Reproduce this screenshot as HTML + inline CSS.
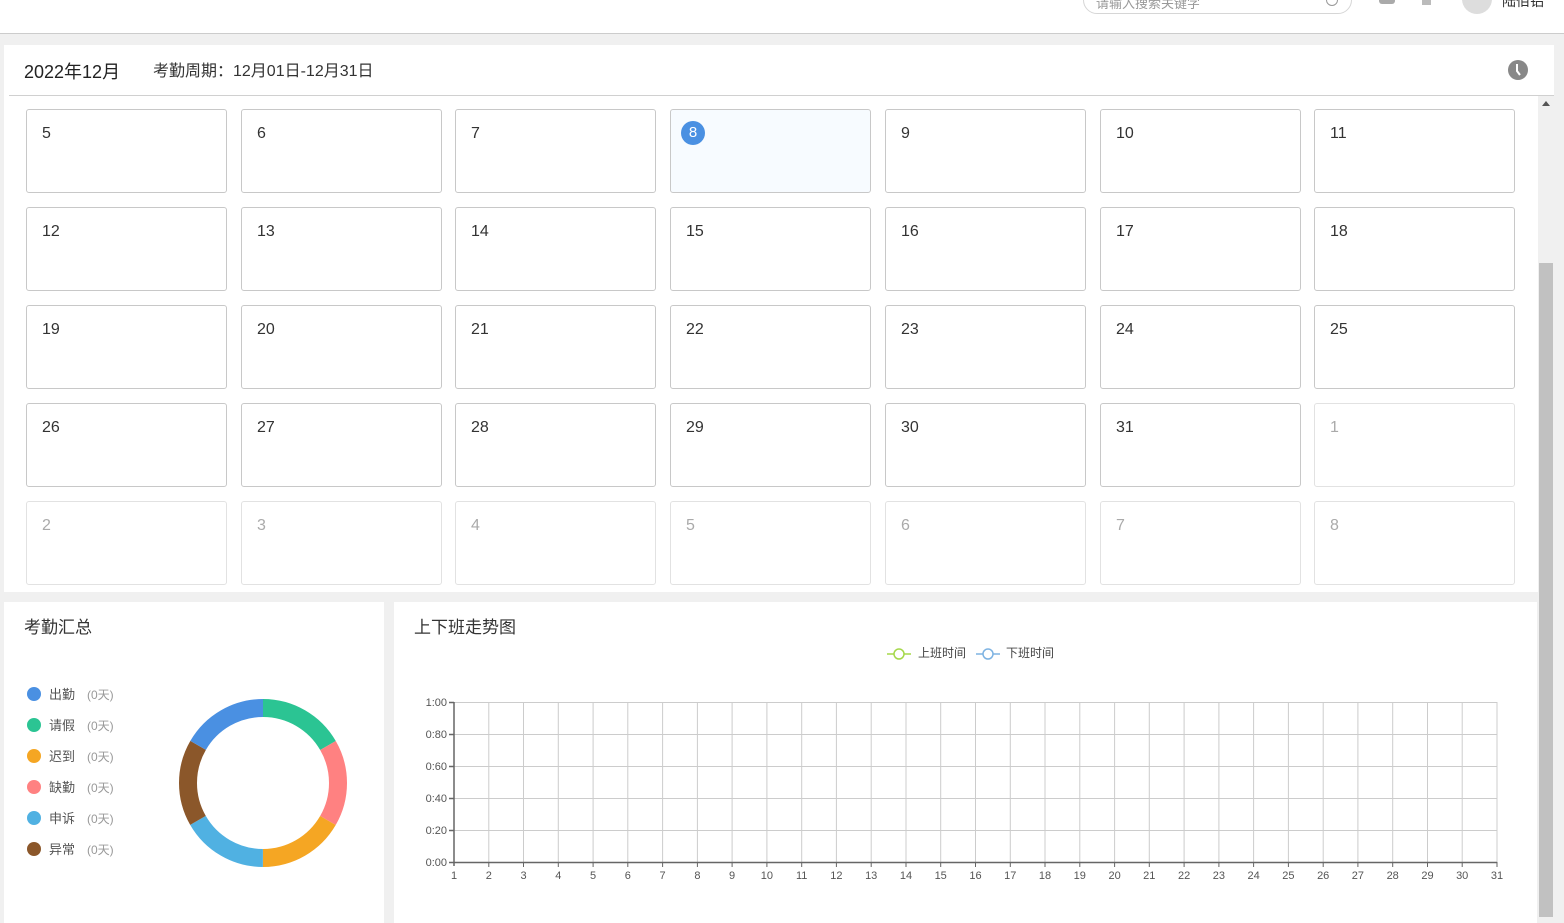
<!DOCTYPE html>
<html><head><meta charset="utf-8"><style>
*{margin:0;padding:0;box-sizing:border-box}
body{width:1564px;height:923px;overflow:hidden;background:#f0f0f0;font-family:"Liberation Sans","Noto Sans CJK SC",sans-serif;position:relative;color:#333}
.a{position:absolute}
.cell{position:absolute;width:201px;height:84px;border:1px solid #c8c8c8;border-radius:3px;background:#fff;font-size:16px;color:#333;padding:15px 0 0 15px}
.cell.o{border-color:#e2e2e2;color:#aaa}
.lg{position:absolute;left:27px;font-size:13px;color:#555}
.lg i{display:inline-block;width:14px;height:14px;border-radius:50%;vertical-align:-2px;margin-right:8px}
.lg span{color:#999;margin-left:12px;font-size:12px}
</style></head><body>
<div class="a" style="left:0;top:0;width:1564px;height:34px;background:#fff;border-bottom:1px solid #ccc"></div>
<div class="a" style="left:1083px;top:-14px;width:269px;height:28px;border:1px solid #d6d6d6;border-radius:14px;background:#fff;font-size:13px;color:#999;padding:10px 0 0 12px;overflow:hidden;line-height:14px">请输入搜索关键字</div>
<div class="a" style="left:1326px;top:-6px;width:12px;height:12px;border:1.5px solid #999;border-radius:50%"></div>
<div class="a" style="left:1379px;top:-4px;width:16px;height:8px;background:#aaa;border-radius:3px"></div>
<div class="a" style="left:1422px;top:-4px;width:9px;height:9px;background:#bbb"></div>
<div class="a" style="left:1462px;top:-16px;width:30px;height:30px;border-radius:50%;background:#ddd"></div>
<div class="a" style="left:1502px;top:-9px;font-size:14px;color:#333">陆佰铝</div>

<div class="a" style="left:4px;top:45px;width:1550px;height:547px;background:#fff"></div>
<div class="a" style="left:24px;top:58px;font-size:18px;color:#222">2022年12月</div>
<div class="a" style="left:153px;top:57px;font-size:16px;color:#333">考勤周期：12月01日-12月31日</div>
<svg class="a" style="left:1508px;top:60px" width="20" height="20"><circle cx="10" cy="10" r="10" fill="#888"/><path d="M9 4v7l3 4" stroke="#fff" stroke-width="2" fill="none"/></svg>
<div class="a" style="left:9px;top:95px;width:1545px;height:1px;background:#d0d0d0"></div>

<div class="cell" style="left:26px;top:109px">5</div><div class="cell" style="left:241px;top:109px">6</div><div class="cell" style="left:455px;top:109px">7</div>
<div class="cell" style="left:670px;top:109px;background:#f7fbff;padding:11px 0 0 10px"><span style="display:inline-block;width:24px;height:24px;border-radius:50%;background:#4a90e2;color:#fff;text-align:center;line-height:24px;font-size:15px">8</span></div>
<div class="cell" style="left:885px;top:109px">9</div><div class="cell" style="left:1100px;top:109px">10</div><div class="cell" style="left:1314px;top:109px">11</div>
<div class="cell" style="left:26px;top:207px">12</div><div class="cell" style="left:241px;top:207px">13</div><div class="cell" style="left:455px;top:207px">14</div><div class="cell" style="left:670px;top:207px">15</div><div class="cell" style="left:885px;top:207px">16</div><div class="cell" style="left:1100px;top:207px">17</div><div class="cell" style="left:1314px;top:207px">18</div>
<div class="cell" style="left:26px;top:305px">19</div><div class="cell" style="left:241px;top:305px">20</div><div class="cell" style="left:455px;top:305px">21</div><div class="cell" style="left:670px;top:305px">22</div><div class="cell" style="left:885px;top:305px">23</div><div class="cell" style="left:1100px;top:305px">24</div><div class="cell" style="left:1314px;top:305px">25</div>
<div class="cell" style="left:26px;top:403px">26</div><div class="cell" style="left:241px;top:403px">27</div><div class="cell" style="left:455px;top:403px">28</div><div class="cell" style="left:670px;top:403px">29</div><div class="cell" style="left:885px;top:403px">30</div><div class="cell" style="left:1100px;top:403px">31</div><div class="cell o" style="left:1314px;top:403px">1</div>
<div class="cell o" style="left:26px;top:501px">2</div><div class="cell o" style="left:241px;top:501px">3</div><div class="cell o" style="left:455px;top:501px">4</div><div class="cell o" style="left:670px;top:501px">5</div><div class="cell o" style="left:885px;top:501px">6</div><div class="cell o" style="left:1100px;top:501px">7</div><div class="cell o" style="left:1314px;top:501px">8</div>

<div class="a" style="left:1538px;top:96px;width:16px;height:827px;background:#f0f0f0"></div>
<div class="a" style="left:1542px;top:101px;width:0;height:0;border-left:4px solid transparent;border-right:4px solid transparent;border-bottom:5px solid #555"></div>
<div class="a" style="left:1539px;top:263px;width:14px;height:654px;background:#c1c1c1"></div>

<div class="a" style="left:4px;top:602px;width:380px;height:321px;background:#fff"></div>
<div class="a" style="left:24px;top:613px;font-size:17px;color:#333">考勤汇总</div>
<div class="lg" style="top:684px"><i style="background:#4a90e2"></i>出勤<span>(0天)</span></div>
<div class="lg" style="top:715px"><i style="background:#2bc493"></i>请假<span>(0天)</span></div>
<div class="lg" style="top:746px"><i style="background:#f5a623"></i>迟到<span>(0天)</span></div>
<div class="lg" style="top:777px"><i style="background:#ff8181"></i>缺勤<span>(0天)</span></div>
<div class="lg" style="top:808px"><i style="background:#50b1e2"></i>申诉<span>(0天)</span></div>
<div class="lg" style="top:839px"><i style="background:#8b572a"></i>异常<span>(0天)</span></div>
<svg class="a" style="left:0;top:0" width="400" height="923">
<g transform="rotate(-90 263 783)" fill="none" stroke-width="18">
<circle cx="263" cy="783" r="75" stroke="#2bc493" stroke-dasharray="78.54 400" stroke-dashoffset="0"/>
<circle cx="263" cy="783" r="75" stroke="#ff8181" stroke-dasharray="78.54 400" stroke-dashoffset="-78.54"/>
<circle cx="263" cy="783" r="75" stroke="#f5a623" stroke-dasharray="78.54 400" stroke-dashoffset="-157.08"/>
<circle cx="263" cy="783" r="75" stroke="#50b1e2" stroke-dasharray="78.54 400" stroke-dashoffset="-235.62"/>
<circle cx="263" cy="783" r="75" stroke="#8b572a" stroke-dasharray="78.54 400" stroke-dashoffset="-314.16"/>
<circle cx="263" cy="783" r="75" stroke="#4a90e2" stroke-dasharray="78.54 400" stroke-dashoffset="-392.7"/>
</g></svg>

<div class="a" style="left:394px;top:602px;width:1143px;height:321px;background:#fff"></div>
<div class="a" style="left:414px;top:613px;font-size:17px;color:#333">上下班走势图</div>
<svg class="a" style="left:0;top:0" width="1537" height="923" font-family="Liberation Sans, Noto Sans CJK SC, sans-serif">
<line x1="887" y1="654" x2="911" y2="654" stroke="#a5d84a" stroke-width="1.5"/><circle cx="899" cy="654" r="5" fill="#fff" stroke="#a5d84a" stroke-width="1.5"/>
<text x="918" y="657" font-size="12" fill="#444">上班时间</text>
<line x1="976" y1="654" x2="1000" y2="654" stroke="#7eb3e2" stroke-width="1.5"/><circle cx="988" cy="654" r="5" fill="#fff" stroke="#7eb3e2" stroke-width="1.5"/>
<text x="1006" y="657" font-size="12" fill="#444">下班时间</text>
<g stroke="#ccc" stroke-width="1">
<path d="M454 702.5H1497M454 734.5H1497M454 766.5H1497M454 798.5H1497M454 830.5H1497"/>
<path d="M488.8 702V862M523.5 702V862M558.3 702V862M593.1 702V862M627.8 702V862M662.6 702V862M697.4 702V862M732.1 702V862M766.9 702V862M801.7 702V862M836.4 702V862M871.2 702V862M906 702V862M940.7 702V862M975.5 702V862M1010.3 702V862M1045 702V862M1079.8 702V862M1114.6 702V862M1149.3 702V862M1184.1 702V862M1218.9 702V862M1253.6 702V862M1288.4 702V862M1323.2 702V862M1357.9 702V862M1392.7 702V862M1427.5 702V862M1462.2 702V862M1497 702V862"/>
</g>
<g stroke="#666" stroke-width="1.5"><path d="M454 702V866M449 862.5H1497M449 702.5H454M449 734.5H454M449 766.5H454M449 798.5H454M449 830.5H454"/></g>
<g stroke="#666"><path d="M488.8 862V867M523.5 862V867M558.3 862V867M593.1 862V867M627.8 862V867M662.6 862V867M697.4 862V867M732.1 862V867M766.9 862V867M801.7 862V867M836.4 862V867M871.2 862V867M906 862V867M940.7 862V867M975.5 862V867M1010.3 862V867M1045 862V867M1079.8 862V867M1114.6 862V867M1149.3 862V867M1184.1 862V867M1218.9 862V867M1253.6 862V867M1288.4 862V867M1323.2 862V867M1357.9 862V867M1392.7 862V867M1427.5 862V867M1462.2 862V867M1497 862V867"/></g>
<g font-size="11" fill="#555" text-anchor="end">
<text x="447" y="706">1:00</text><text x="447" y="738">0:80</text><text x="447" y="770">0:60</text><text x="447" y="802">0:40</text><text x="447" y="834">0:20</text><text x="447" y="866">0:00</text>
</g>
<g font-size="11" fill="#555" text-anchor="middle">
<text x="454" y="879">1</text><text x="488.8" y="879">2</text><text x="523.5" y="879">3</text><text x="558.3" y="879">4</text><text x="593.1" y="879">5</text><text x="627.8" y="879">6</text><text x="662.6" y="879">7</text><text x="697.4" y="879">8</text><text x="732.1" y="879">9</text><text x="766.9" y="879">10</text><text x="801.7" y="879">11</text><text x="836.4" y="879">12</text><text x="871.2" y="879">13</text><text x="906" y="879">14</text><text x="940.7" y="879">15</text><text x="975.5" y="879">16</text><text x="1010.3" y="879">17</text><text x="1045" y="879">18</text><text x="1079.8" y="879">19</text><text x="1114.6" y="879">20</text><text x="1149.3" y="879">21</text><text x="1184.1" y="879">22</text><text x="1218.9" y="879">23</text><text x="1253.6" y="879">24</text><text x="1288.4" y="879">25</text><text x="1323.2" y="879">26</text><text x="1357.9" y="879">27</text><text x="1392.7" y="879">28</text><text x="1427.5" y="879">29</text><text x="1462.2" y="879">30</text><text x="1497" y="879">31</text>
</g>
</svg>
</body></html>
